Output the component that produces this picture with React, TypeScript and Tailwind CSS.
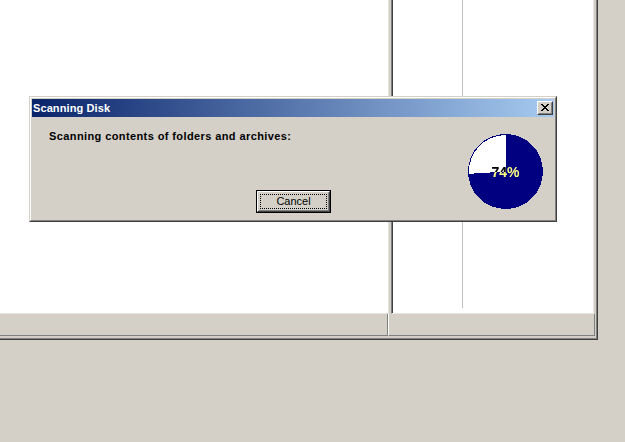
import React from "react";

function CloseGlyph() {
  const cells: [number, number, number][] = [
    [0, 0, 2], [6, 0, 2],
    [1, 1, 2], [5, 1, 2],
    [2, 2, 4],
    [3, 3, 2],
    [2, 4, 4],
    [1, 5, 2], [5, 5, 2],
    [0, 6, 2], [6, 6, 2],
  ];
  return (
    <svg width="8" height="7" viewBox="0 0 8 7" shapeRendering="crispEdges" className="block">
      {cells.map(([x, y, w], i) => (
        <rect key={i} x={x} y={y} width={w} height={1} fill="#000" />
      ))}
    </svg>
  );
}

function Pie({ percent }: { percent: number }) {
  const size = 75;
  const c = size / 2;
  const r = c - 1;
  const theta = (percent / 100) * 2 * Math.PI;
  const ex = c + r * Math.sin(theta);
  const ey = c - r * Math.cos(theta);
  const largeArc = 1 - percent / 100 > 0.5 ? 1 : 0;
  return (
    <div className="relative isolate w-[75px] h-[75px]">
      <svg width={size} height={size} viewBox={`0 0 ${size} ${size}`} shapeRendering="crispEdges" className="block">
        <circle cx={c} cy={c} r={c} fill="#000080" />
        <path d={`M${c} ${c} L${c} ${c - r} A${r} ${r} 0 ${largeArc} 0 ${ex} ${ey} Z`} fill="#ffffff" />
      </svg>
      <div className="absolute inset-0 flex items-center justify-center">
        <span className="text-white mix-blend-difference font-bold text-[14px] leading-none">{percent}%</span>
      </div>
    </div>
  );
}

export default function App() {
  return (
    <div className="relative w-[625px] h-[442px] overflow-hidden bg-[#d4d0c8] font-['Liberation_Sans',Arial,sans-serif] text-[11px] text-black">
      {/* main window (extends beyond top/left) */}
      <div className="w-[598px] h-[340px] border-r border-b border-[#404040]">
        <div className="w-full h-full border-r border-b border-[#808080] flex flex-col">
          {/* panes */}
          <div className="flex h-[314px]">
            <div className="w-[389px] h-[314px] bg-white border-r border-b border-[#e6e4e0]" />
            <div className="w-[2px]" />
            <div className="w-[203px] h-[314px] border-l border-[#808080] border-r border-b border-r-[#e6e4e0] border-b-[#e6e4e0]">
              <div className="h-full border-l border-[#404040] bg-white pl-[69px]">
                <div className="w-px h-[308px] bg-[#c0c0c0]" />
              </div>
            </div>
          </div>
          {/* status bar */}
          <div className="flex h-[24px]">
            <div className="w-[388px] h-[22px] border-r border-b border-[#808080]" />
            <div className="w-[207px] h-[22px] border-l border-l-white border-r border-b border-r-[#808080] border-b-[#808080]" />
          </div>
        </div>
      </div>

      {/* Scanning Disk dialog */}
      <div className="absolute left-[29px] top-[96px] w-[528px] h-[126px] border border-t-[#d4d0c8] border-l-[#d4d0c8] border-r-[#404040] border-b-[#404040]">
        <div className="h-full border border-t-white border-l-white border-r-[#808080] border-b-[#808080] p-px bg-[#d4d0c8] flex flex-col">
          <div className="h-[18px] bg-[linear-gradient(to_right,#0a246a,#a6caf0)] flex items-center justify-between pl-px pr-px">
            <span className="text-white font-bold text-[11px] leading-none tracking-[0.1px]">Scanning Disk</span>
            <div className="w-[16px] h-[14px] border border-t-white border-l-white border-r-[#404040] border-b-[#404040]">
              <div className="h-full border border-t-[#d4d0c8] border-l-[#d4d0c8] border-r-[#808080] border-b-[#808080] bg-[#d4d0c8] pl-[2px] pt-px">
                <CloseGlyph />
              </div>
            </div>
          </div>
          <div className="flex-1 grid">
            <div className="[grid-area:1/1] flex flex-col items-start">
              <div className="pl-[17px] pt-[13px] font-bold leading-[13px] tracking-[0.4px]">
                Scanning contents of folders and archives:
              </div>
              <div className="ml-[224px] mt-[47px] w-[75px] h-[23px] border border-black">
                <div className="h-full border border-t-white border-l-white border-r-[#404040] border-b-[#404040]">
                  <div className="h-full border border-t-[#d4d0c8] border-l-[#d4d0c8] border-r-[#808080] border-b-[#808080] p-px">
                    <div className="h-full border border-dotted border-black flex items-center justify-center leading-none">
                      Cancel
                    </div>
                  </div>
                </div>
              </div>
            </div>
            <div className="[grid-area:1/1] flex justify-end items-start pt-[17px] pr-[11px]">
              <Pie percent={74} />
            </div>
          </div>
        </div>
      </div>
    </div>
  );
}
